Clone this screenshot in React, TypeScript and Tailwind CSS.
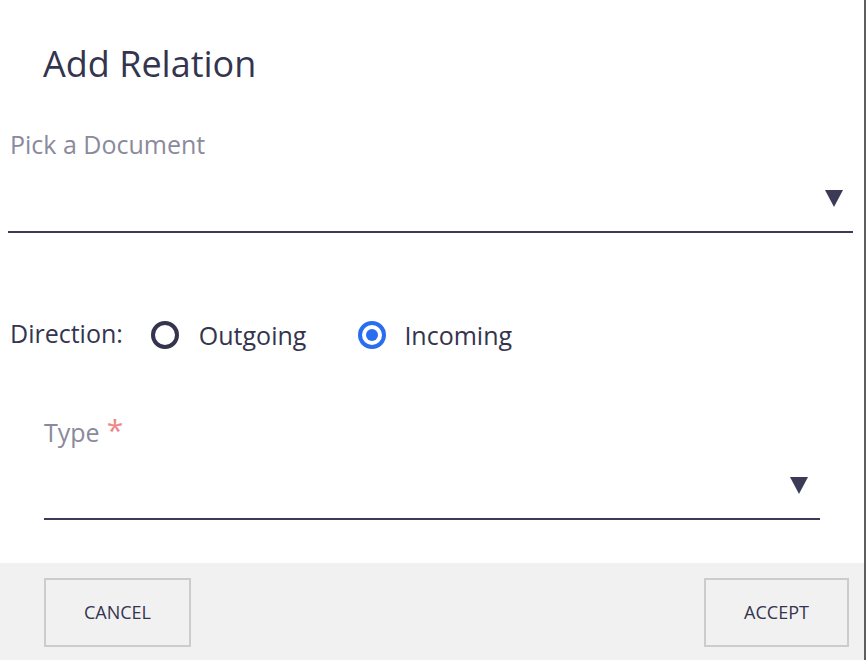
import React from 'react'

function Caret() {
  return (
    <svg width="18" height="17" viewBox="0 0 18 17" className="shrink-0">
      <polygon points="0,0 18,0 9,17" fill="#3b3b58" />
    </svg>
  )
}

function Radio({ checked }: { checked?: boolean }) {
  if (checked) {
    return (
      <span className="flex h-[28px] w-[28px] shrink-0 items-center justify-center rounded-full border-[4px] border-[#2a6ef0]">
        <span className="h-[12px] w-[12px] rounded-full bg-[#2a6ef0]" />
      </span>
    )
  }
  return <span className="block h-[28px] w-[28px] shrink-0 rounded-full border-[4px] border-[#34344e]" />
}

export default function App() {
  return (
    <div className="flex h-[660px] w-[866px] bg-white font-['Open_Sans',sans-serif] text-[#34344e]">
      <div className="flex w-[864px] flex-col">
        <div className="flex-1">
          {/* Title */}
          <h1 className="pl-[43px] pt-[40px] text-[36px] leading-[48px] font-normal">Add Relation</h1>

          {/* Document picker */}
          <div className="ml-[8px] mr-[11px] mt-[39px]">
            <p className="pl-[2px] text-[25px] leading-[34px] text-[#8a8a9c]">Pick a Document</p>
            <div className="flex h-[72px] items-center justify-end border-b-2 border-[#3b3b58] pr-[10px] pt-[4px]">
              <Caret />
            </div>
          </div>

          {/* Direction */}
          <div className="ml-[10px] mt-[85px] flex h-[34px] items-center text-[25px] leading-[34px]">
            <span className="pb-[4px]">Direction:</span>
            <span className="ml-[28px]"><Radio /></span>
            <span className="ml-[20px]">Outgoing</span>
            <span className="ml-[52px]"><Radio checked /></span>
            <span className="ml-[18px]">Incoming</span>
          </div>

          {/* Type */}
          <div className="mx-[44px] mt-[63px]">
            <p className="flex items-start text-[25px] leading-[34px] text-[#8a8a9c]">
              Type
              <span className="ml-[7px] text-[30px] leading-[30px] text-[#f08585]">*</span>
            </p>
            <div className="flex h-[71px] items-center justify-end border-b-2 border-[#3b3b58] pr-[12px] pt-[4px]">
              <Caret />
            </div>
          </div>
        </div>

        {/* Footer */}
        <div className="flex h-[97px] items-start justify-between bg-[#f1f1f1] pl-[44px] pr-[15px] pt-[15px]">
          <button className="flex h-[69px] w-[147px] items-center justify-center border-2 border-[#cccccc] text-[18px] text-[#34344e]">
            CANCEL
          </button>
          <button className="flex h-[69px] w-[145px] items-center justify-center border-2 border-[#cccccc] text-[18px] text-[#34344e]">
            ACCEPT
          </button>
        </div>
      </div>
      <div className="w-[2px] bg-[#5e5e5e]" />
    </div>
  )
}
